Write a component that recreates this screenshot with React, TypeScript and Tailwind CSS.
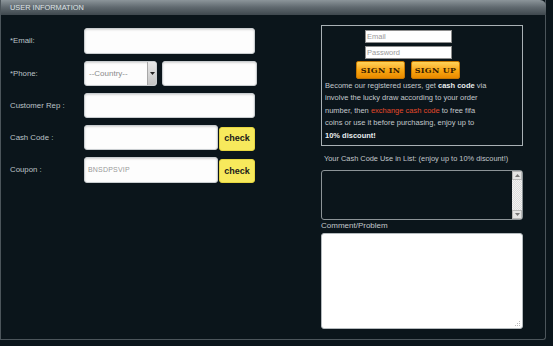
import React from "react";

const field =
  "bg-[#fdfdfd] border border-[#c9cdd0] rounded-[3px] shadow-[inset_0_1px_2px_rgba(0,0,0,0.15)]";

const Label = ({ children }: { children: React.ReactNode }) => (
  <div className="w-[74px] shrink-0 text-[7.8px] text-[#bcc3c7]">{children}</div>
);

const CheckButton = () => (
  <button className="w-[36px] h-[24px] rounded-[3px] bg-[#f7e95c] text-[9px] font-bold text-[#1a1a1a] border border-[#e6d640]">
    check
  </button>
);

const Arrow = ({ up }: { up?: boolean }) => (
  <div className="h-[9px] w-full bg-[#e4e4e4] border border-[#b8b8b8] flex items-center justify-center">
    <svg width="5" height="3" viewBox="0 0 5 3">
      <path d={up ? "M0 3 L2.5 0 L5 3 Z" : "M0 0 L2.5 3 L5 0 Z"} fill="#777" />
    </svg>
  </div>
);

export default function App() {
  return (
    <div
      className="w-[553px] h-[346px] bg-[#0b151b] overflow-hidden"
      style={{ fontFamily: '"Liberation Sans", Arial, sans-serif' }}
    >
      <div className="w-[546px] h-[340px] border-l border-r border-b border-[#4c555b] rounded-br-[3px] flex flex-col">
        <div className="h-[15px] -mr-px rounded-tr-[6px] bg-gradient-to-b from-[#8c959a] via-[#5f686e] to-[#3f484e] flex items-center pl-[9px]">
          <span className="text-[7.4px] text-[#dfe3e6]">USER INFORMATION</span>
        </div>

        <div className="flex flex-1">
          {/* left column */}
          <div className="w-[320px] shrink-0 pl-[9px] pt-[13px] flex flex-col gap-[7px]">
            <div className="flex items-center h-[26px]">
              <Label>*Email:</Label>
              <div className={`${field} w-[171px] h-[26px]`} />
            </div>
            <div className="flex items-center h-[25px]">
              <Label>*Phone:</Label>
              <div className={`${field} w-[73px] h-[25px] flex items-center overflow-hidden`}>
                <span className="flex-1 pl-[4px] text-[8px] text-[#8a8a8a]">--Country--</span>
                <div className="w-[9px] h-full bg-gradient-to-b from-[#e8e8e8] to-[#c4c4c4] border-l border-[#a8a8a8] flex items-center justify-center">
                  <svg width="5" height="3" viewBox="0 0 5 3">
                    <path d="M0 0 L2.5 3 L5 0 Z" fill="#222" />
                  </svg>
                </div>
              </div>
              <div className={`${field} ml-[5px] w-[95px] h-[25px]`} />
            </div>
            <div className="flex items-center h-[25px]">
              <Label>Customer Rep :</Label>
              <div className={`${field} w-[171px] h-[25px]`} />
            </div>
            <div className="flex items-center h-[25px]">
              <Label>Cash Code :</Label>
              <div className={`${field} w-[134px] h-[25px]`} />
              <div className="ml-px">
                <CheckButton />
              </div>
            </div>
            <div className="flex items-center h-[26px]">
              <Label>Coupon :</Label>
              <div className={`${field} w-[134px] h-[26px] flex items-center pl-[3px]`}>
                <span className="text-[7px] text-[#9a9a9a] tracking-[0.2px]">BNSDPSVIP</span>
              </div>
              <div className="ml-px">
                <CheckButton />
              </div>
            </div>
          </div>

          {/* right column */}
          <div className="w-[202px] shrink-0 pt-[10px] flex flex-col">
            <div className="h-[121px] border border-[#a9b1b5] pt-[4px] flex flex-col">
              <div className="pl-[43px] flex flex-col gap-[3px]">
                <div className="w-[87px] h-[13px] bg-white border border-[#8e8e8e] text-[7.5px] text-[#9a9a9a] pl-[1px] leading-[11px]">
                  Email
                </div>
                <div className="w-[87px] h-[13px] bg-white border border-[#8e8e8e] text-[7.5px] text-[#9a9a9a] pl-[1px] leading-[11px]">
                  Password
                </div>
              </div>
              <div className="flex gap-[6px] pl-[34px] mt-[2px]">
                {["SIGN IN", "SIGN UP"].map((t) => (
                  <button
                    key={t}
                    className="w-[49px] h-[18px] rounded-[2px] bg-gradient-to-b from-[#ffd257] via-[#f9a811] to-[#e98a00] border border-[#c77800] text-[8px] font-bold text-[#3a2000] tracking-[0.3px]"
                    style={{ fontFamily: '"DejaVu Serif", "Liberation Serif", serif' }}
                  >
                    {t}
                  </button>
                ))}
              </div>
              <p className="mt-[1px] pl-[3px] text-[7.5px] leading-[12.4px] text-[#c2c8cb]">
                Become our registered users, get <b className="text-[#e8ecee]">cash code</b> via
                <br />
                involve the lucky draw according to your order
                <br />
                number, then <span className="text-[#e0482a]">exchange cash code</span> to free fifa
                <br />
                coins or use it before purchasing, enjoy up to
                <br />
                <b className="text-[#e8ecee]">10% discount!</b>
              </p>
            </div>

            <div className="mt-[8px] pl-[3px] text-[7.4px] text-[#c2c8cb] leading-[10px]">
              Your Cash Code Use in List: (enjoy up to 10% discount!)
            </div>

            <div className="mt-[6px] h-[50px] border border-[#8d9498] rounded-[3px] flex justify-end overflow-hidden">
              <div className="w-[10px] h-full flex flex-col bg-[repeating-conic-gradient(#f2f2f2_0%_25%,#dcdcdc_0%_50%)] bg-[length:2px_2px]">
                <Arrow up />
                <div className="flex-1" />
                <Arrow />
              </div>
            </div>

            <div className="mt-[1px] text-[8px] text-[#c2c8cb] leading-[10px]">Comment/Problem</div>

            <div className="mt-[2px] h-[96px] bg-white border border-[#b4babd] rounded-[3px] relative">
              <svg className="absolute right-[1px] bottom-[1px]" width="7" height="7" viewBox="0 0 7 7">
                <rect x="5" y="1" width="1" height="1" fill="#bbb" />
                <rect x="3" y="3" width="1" height="1" fill="#bbb" />
                <rect x="5" y="3" width="1" height="1" fill="#bbb" />
                <rect x="1" y="5" width="1" height="1" fill="#bbb" />
                <rect x="3" y="5" width="1" height="1" fill="#bbb" />
                <rect x="5" y="5" width="1" height="1" fill="#bbb" />
              </svg>
            </div>
          </div>
        </div>
      </div>
    </div>
  );
}
